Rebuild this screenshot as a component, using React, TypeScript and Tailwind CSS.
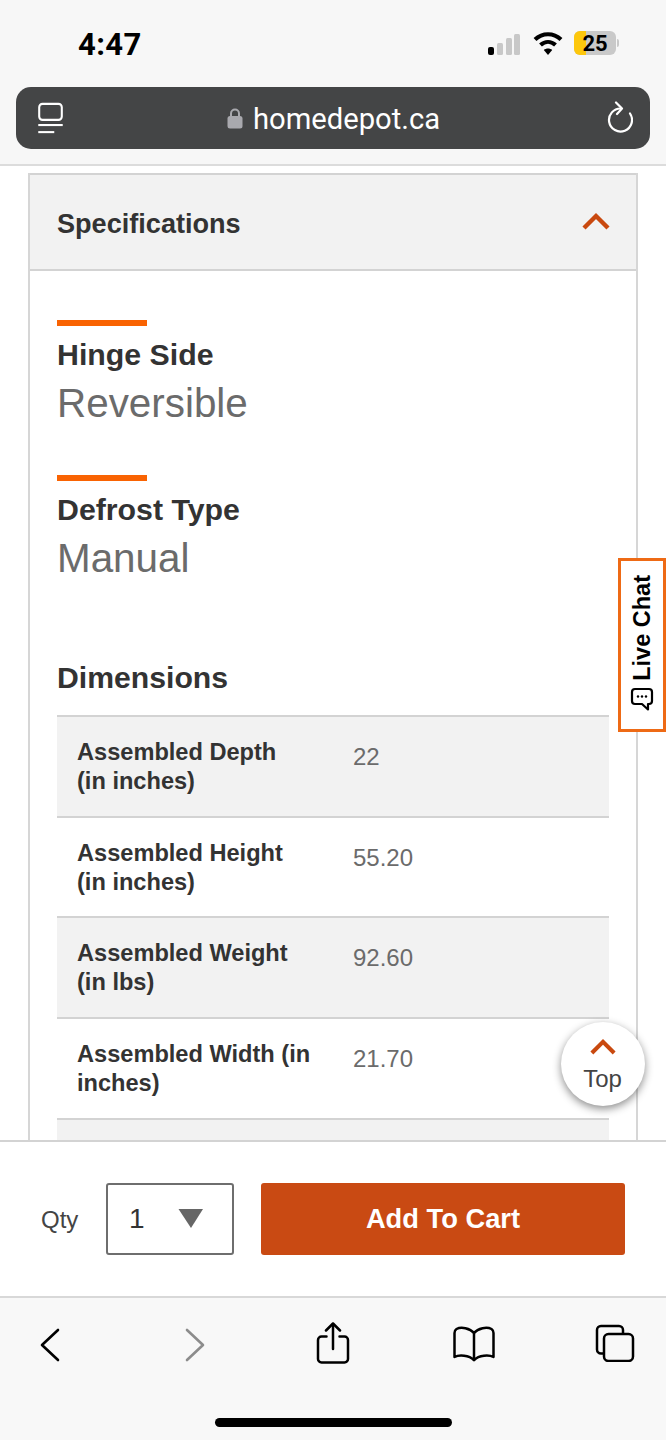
import React from 'react';

const rows = [
  { label: 'Assembled Depth (in inches)', lines: ['Assembled Depth', '(in inches)'], value: '22', shaded: true },
  { label: 'Assembled Height (in inches)', lines: ['Assembled Height', '(in inches)'], value: '55.20', shaded: false },
  { label: 'Assembled Weight (in lbs)', lines: ['Assembled Weight', '(in lbs)'], value: '92.60', shaded: true },
  { label: 'Assembled Width (in inches)', lines: ['Assembled Width (in', 'inches)'], value: '21.70', shaded: false },
];

const Chevron = ({ className }: { className: string }) => (
  <svg viewBox="0 0 28 18" className={className} fill="none" stroke="#c9490f" strokeWidth="4.4">
    <path d="M2 16 L14 4 L26 16" />
  </svg>
);

const Spec = ({ title, value }: { title: string; value: string }) => (
  <div className="flex flex-col">
    <div className="w-[90px] h-[6px] bg-[#f96302]" />
    <h3 className="mt-[12px] text-[30.3px] leading-[34px] font-bold text-[#333]">{title}</h3>
    <p className="mt-[8px] text-[40.4px] leading-[46px] text-[#6b6b6b]">{value}</p>
  </div>
);

export default function App() {
  return (
    <div className="relative w-[666px] h-[1440px] overflow-hidden flex flex-col bg-white font-['Liberation_Sans',Arial,sans-serif]">
      {/* Safari top */}
      <header className="h-[166px] shrink-0 bg-[#f7f7f7] border-b-2 border-[#dcdcdc] flex flex-col px-[16px]">
        <div className="h-[87px] flex items-start justify-between pl-[62px] pr-[31px]">
          <span className="mt-[27px] text-[31px] leading-[36px] font-bold text-black font-['Roboto',sans-serif] tracking-[0.4px]">4:47</span>
          <div className="mt-[30px] flex items-center gap-[12px]">
            <svg width="34" height="24" viewBox="0 0 34 24">
              <rect x="1" y="16" width="6" height="8" rx="2" fill="#000" />
              <rect x="10" y="12" width="6" height="12" rx="1.5" fill="#c8c8c8" />
              <rect x="19" y="7" width="6" height="17" rx="1.5" fill="#c8c8c8" />
              <rect x="27" y="3" width="6" height="21" rx="1.5" fill="#c8c8c8" />
            </svg>
            <svg width="30" height="26" viewBox="0 0 30 26" fill="none" stroke="#000" strokeWidth="4.2">
              <path d="M2 9.5 C9.5 2.5 20.5 2.5 28 9.5" />
              <path d="M7.5 15 C12 11 18 11 22.5 15" />
              <path d="M15 25 L10.8 20 C13 18 17 18 19.2 20 Z" fill="#000" stroke="none" />
            </svg>
            <div className="flex items-center gap-[1px] -ml-[1px]">
              <div className="relative w-[42px] h-[24px] rounded-[6px] overflow-hidden bg-[#c9c9c9] flex">
                <div className="w-[12px] bg-[#fdc70c]" />
                <span className="absolute inset-0 flex items-center justify-center text-[22px] font-bold text-black font-['Roboto',sans-serif]">25</span>
              </div>
              <div className="w-[2px] h-[8px] rounded-r-full bg-[#c9c9c9]" />
            </div>
          </div>
        </div>
        <div className="h-[62px] rounded-[15px] bg-[#444546] flex items-center justify-between pl-[21px] pr-[17px]">
          <svg width="27" height="32" viewBox="0 0 28 34" fill="none" stroke="#fff" strokeWidth="2.2">
            <rect x="2" y="2" width="24" height="17" rx="3.5" />
            <path d="M1 24.5 H27" />
            <path d="M1 32 H18" />
          </svg>
          <div className="flex items-center gap-[10px] text-white -ml-[2px]">
            <svg width="16" height="22" viewBox="0 0 16 22">
              <path d="M4 10 V6.5 a4 4 0 0 1 8 0 V10" fill="none" stroke="#a9a9ae" strokeWidth="2" />
              <rect x="0.5" y="9" width="15" height="12.5" rx="2.5" fill="#a9a9ae" />
            </svg>
            <span className="mt-[2px] text-[29.2px] leading-[34px] font-['Roboto',sans-serif]">homedepot.ca</span>
          </div>
          <svg width="28" height="34" viewBox="0 0 28 34" fill="none" stroke="#fff" strokeWidth="2.2" strokeLinecap="round" strokeLinejoin="round">
            <path d="M16 7.5 A11.5 11.5 0 1 0 25 12.5" />
            <path d="M11 1.5 L17 7.5 L12 13" />
          </svg>
        </div>
      </header>

      {/* Page content */}
      <main className="h-[974px] shrink-0 overflow-hidden px-[28px] pt-[7px]">
        <section className="h-full border-x-2 border-[#d6d6d6]">
          <div className="h-[98px] bg-[#f2f2f2] border-y-2 border-[#d3d3d3] flex items-center justify-between pl-[27px] pr-[26px]">
            <h2 className="mt-[3px] text-[27.1px] leading-[32px] font-bold text-[#333]">Specifications</h2>
            <Chevron className="w-[28px] h-[18px] -mt-[2px]" />
          </div>
          <div className="px-[27px] pt-[49px] flex flex-col">
            <div className="flex flex-col gap-[49px]">
              <Spec title="Hinge Side" value="Reversible" />
              <Spec title="Defrost Type" value="Manual" />
            </div>
            <h3 className="mt-[80px] text-[30.2px] leading-[34px] font-bold text-[#333]">Dimensions</h3>
            <div className="mt-[20px]">
              {rows.map((row) => (
                <div
                  key={row.label}
                  className={`h-[100.7px] border-t-2 border-[#d3d3d3] pl-[20px] pt-[21px] flex ${row.shaded ? 'bg-[#f2f2f2]' : 'bg-white'}`}
                >
                  <div className="w-[276px] text-[23.6px] leading-[29px] font-bold text-[#333]">
                    {row.lines.map((line) => (
                      <div key={line}>{line}</div>
                    ))}
                  </div>
                  <div className="mt-[4px] text-[24px] leading-[29px] text-[#6b6b6b]">{row.value}</div>
                </div>
              ))}
              <div className="h-[40px] border-t-2 border-[#d3d3d3] bg-[#f2f2f2]" />
            </div>
          </div>
        </section>
      </main>

      {/* Add to cart bar */}
      <div className="h-[156px] shrink-0 bg-white border-t-2 border-[#d3d3d3] flex items-center pl-[41px] pr-[41px]">
        <span className="mt-[2px] text-[24px] text-[#444] w-[65px]">Qty</span>
        <div className="w-[128px] h-[72px] border-2 border-[#6e6e6e] rounded-[3px] flex items-center justify-between pl-[21px] pr-[28px]">
          <span className="text-[28px] text-[#333]">1</span>
          <svg width="26" height="20" viewBox="0 0 26 20" className="-mt-[2px]">
            <path d="M0.5 1 H25 L13 20 Z" fill="#666" />
          </svg>
        </div>
        <button className="ml-[27px] w-[364px] h-[72px] rounded-[3px] bg-[#c94a13] text-white text-[27.3px] font-bold">Add To Cart</button>
      </div>

      {/* Safari bottom */}
      <footer className="flex-1 bg-[#f8f8f8] border-t-2 border-[#d8d8d8] flex flex-col items-center">
        <div className="w-full flex items-start pl-[40px] pt-[24px] h-[113px]">
          <svg width="20" height="34" viewBox="0 0 20 34" fill="none" stroke="#000" strokeWidth="2.6" strokeLinecap="round" strokeLinejoin="round" className="mt-[6px]">
            <path d="M18 2 L2 17 L18 32" />
          </svg>
          <svg width="20" height="34" viewBox="0 0 20 34" fill="none" stroke="#8c8c8c" strokeWidth="2.6" strokeLinecap="round" strokeLinejoin="round" className="mt-[6px] ml-[125px]">
            <path d="M2 2 L18 17 L2 32" />
          </svg>
          <svg width="34" height="42" viewBox="0 0 34 42" fill="none" stroke="#000" strokeWidth="2.5" strokeLinecap="round" strokeLinejoin="round" className="ml-[111px]">
            <path d="M10.5 14.5 H5.5 a3.5 3.5 0 0 0 -3.5 3.5 V37 a3.5 3.5 0 0 0 3.5 3.5 H28.5 a3.5 3.5 0 0 0 3.5 -3.5 V18 a3.5 3.5 0 0 0 -3.5 -3.5 H23.5" />
            <path d="M17 27 V2" />
            <path d="M10 8.5 L17 1.5 L24 8.5" />
          </svg>
          <svg width="42" height="36" viewBox="0 0 42 36" fill="none" stroke="#000" strokeWidth="2.5" strokeLinecap="round" strokeLinejoin="round" className="mt-[4px] ml-[103px]">
            <path d="M21 7 C17 2 8 0.5 3.5 3 C2 4 1.5 5 1.5 7 V31 C6 28.5 16 29 21 34 C26 29 36 28.5 40.5 31 V7 C40.5 5 40 4 38.5 3 C34 0.5 25 2 21 7 Z" />
            <path d="M21 7 V34" />
          </svg>
          <svg width="40" height="38" viewBox="0 0 40 38" fill="none" stroke="#000" strokeWidth="2.5" strokeLinejoin="round" className="mt-[2px] ml-[100px]">
            <path d="M8 29.5 H6 a4 4 0 0 1 -4 -4 V6 a4 4 0 0 1 4 -4 H24 a4 4 0 0 1 4 4 V9" />
            <rect x="9" y="10" width="29" height="27" rx="4.5" />
          </svg>
        </div>
        <div className="mt-[7px] w-[237px] h-[9px] rounded-full bg-black" />
      </footer>

      {/* Live chat tab */}
      <div className="absolute left-[618px] top-[558px] w-[48px] h-[174px] bg-white border-[3px] border-[#ee6a15] flex flex-col items-center pt-[14px] gap-[6px]">
        <span className="[writing-mode:vertical-rl] rotate-180 text-[23.5px] leading-[24px] font-bold text-black">Live Chat</span>
        <svg width="24" height="24" viewBox="0 0 24 24" fill="none" stroke="#000" strokeWidth="2.2" strokeLinejoin="round">
          <path d="M5 2 H19 a3 3 0 0 1 3 3 V14 a3 3 0 0 1 -3 3 H18 V22.5 L12 17 H5 a3 3 0 0 1 -3 -3 V5 a3 3 0 0 1 3 -3 Z" />
          <circle cx="8" cy="9.5" r="1.2" fill="#000" stroke="none" />
          <circle cx="12" cy="9.5" r="1.2" fill="#000" stroke="none" />
          <circle cx="16" cy="9.5" r="1.2" fill="#000" stroke="none" />
        </svg>
      </div>

      {/* Back to top */}
      <button className="absolute left-[561px] top-[1022px] w-[84px] h-[84px] rounded-full bg-white shadow-[0_3px_8px_rgba(0,0,0,0.45)] flex flex-col items-center pt-[16px]">
        <Chevron className="w-[26px] h-[17px] -ml-[1px]" />
        <span className="mt-[10px] -ml-[1px] text-[24px] leading-[28px] text-[#444]">Top</span>
      </button>
    </div>
  );
}
